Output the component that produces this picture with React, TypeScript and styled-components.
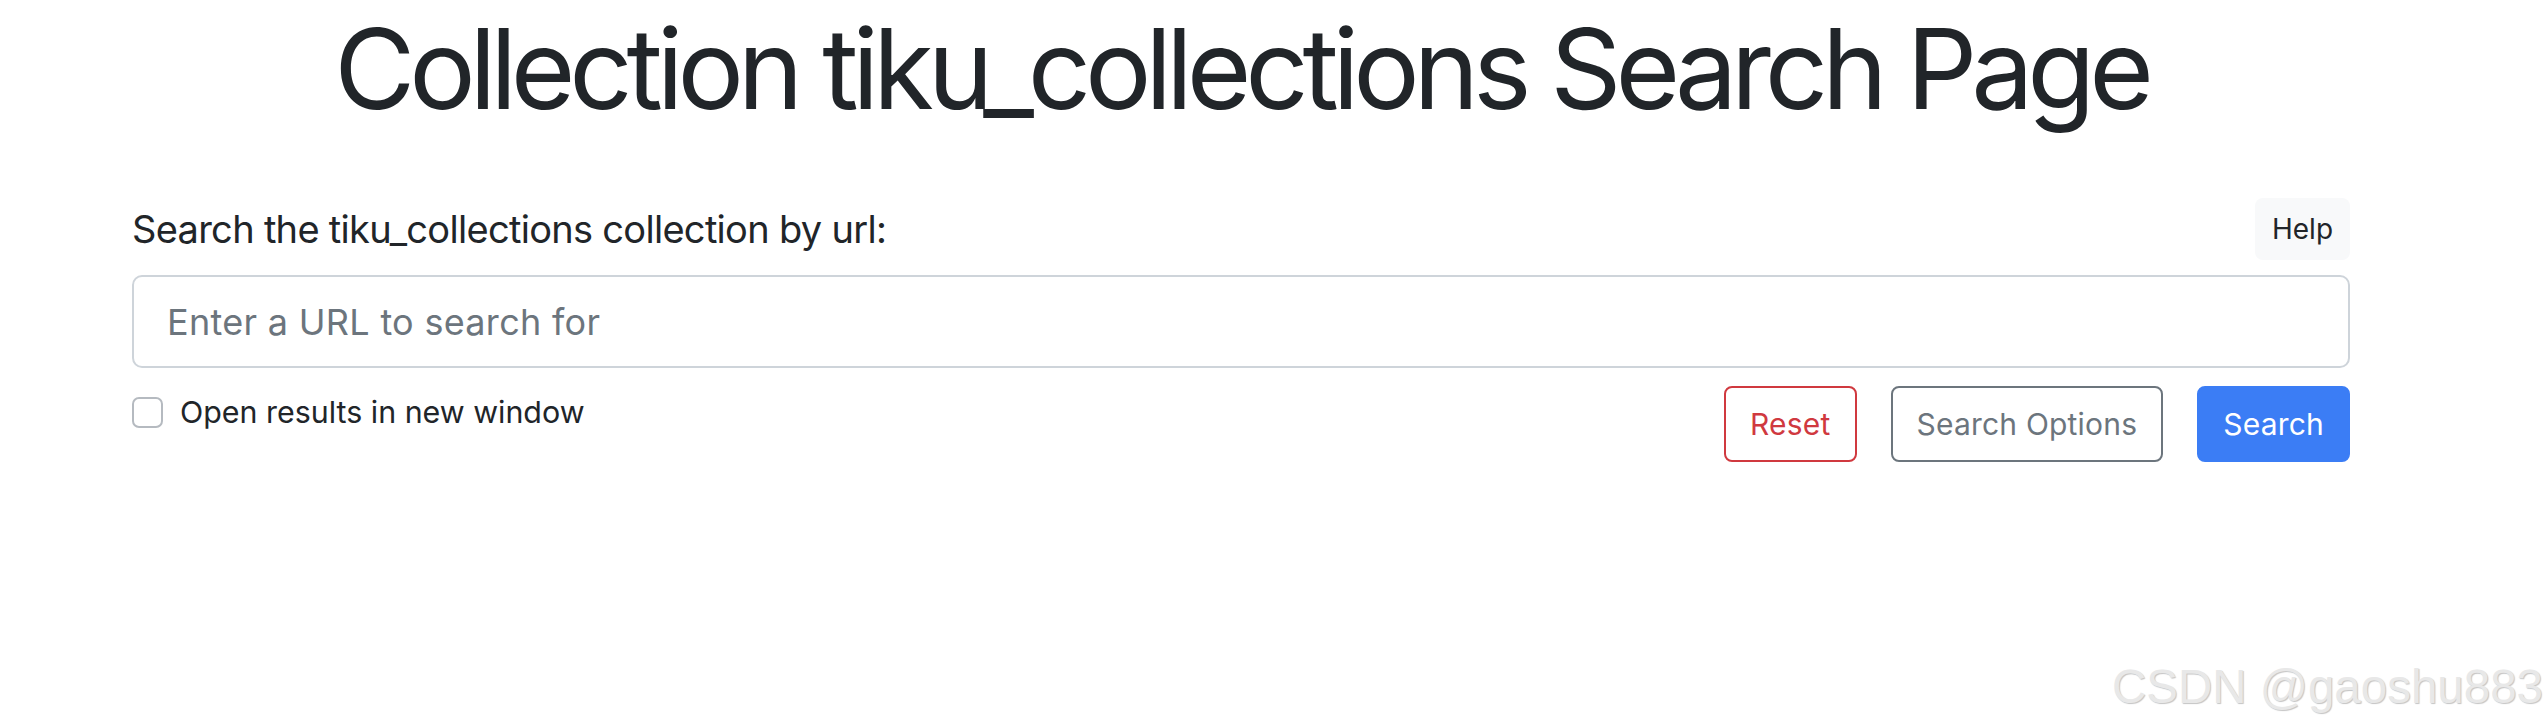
import React from "react";
import styled, { createGlobalStyle } from "styled-components";

const Global = createGlobalStyle`
  html, body { margin: 0; padding: 0; background: #fff; }
  body { font-family: Inter, "Noto Sans", sans-serif; color: #212529; }
  * { box-sizing: border-box; }
`;

const Page = styled.div`
  position: relative;
  width: 2548px;
  height: 728px;
  overflow: hidden;
`;

const Container = styled.main`
  width: 2218px;
  margin-left: 132px;
  display: flex;
  flex-direction: column;
`;

const Title = styled.h1`
  margin: 0;
  height: 132px;
  padding-top: 9px;
  font-size: 111px;
  font-weight: 400;
  line-height: 120px;
  letter-spacing: -6.2px;
  text-align: center;
  color: #212529;
  white-space: nowrap;
`;

const LabelRow = styled.div`
  margin-top: 66px;
  display: flex;
  align-items: center;
  justify-content: space-between;
`;

const Label = styled.label`
  font-size: 38px;
  font-weight: 400;
  letter-spacing: -0.7px;
  color: #212529;
`;

const HelpButton = styled.button`
  width: 95px;
  height: 62px;
  border: none;
  border-radius: 8px;
  background: #f8f9fa;
  color: #212529;
  font-family: Inter, sans-serif;
  font-size: 28px;
  padding: 0;
`;

const UrlInput = styled.input`
  margin-top: 15px;
  height: 93px;
  width: 100%;
  border: 2px solid #ced4da;
  border-radius: 10px;
  padding: 0 33px;
  font-family: Inter, sans-serif;
  font-size: 36px;
  letter-spacing: 0.3px;
  color: #212529;
  outline: none;
  &::placeholder { color: #6c757d; }
`;

const ActionRow = styled.div`
  margin-top: 18px;
  display: flex;
  align-items: flex-start;
  justify-content: space-between;
`;

const CheckLabel = styled.label`
  margin-top: 8px;
  display: flex;
  align-items: center;
  gap: 17px;
  font-size: 30.4px;
  color: #212529;
`;

const CheckBox = styled.span`
  width: 31px;
  height: 31px;
  border: 2px solid #b5bac0;
  border-radius: 7px;
  background: #fff;
`;

const Buttons = styled.div`
  display: flex;
  gap: 34px;
`;

const Btn = styled.button<{ $variant: "danger" | "secondary" | "primary" }>`
  height: 76px;
  padding: 0 24px;
  border-radius: 8px;
  font-family: Inter, sans-serif;
  font-size: 30px;
  letter-spacing: 0.2px;
  border: 2px solid
    ${(p) => (p.$variant === "danger" ? "#d0393f" : p.$variant === "secondary" ? "#6c757d" : "#3b7df5")};
  color: ${(p) => (p.$variant === "danger" ? "#d0393f" : p.$variant === "secondary" ? "#6c757d" : "#fff")};
  background: ${(p) => (p.$variant === "primary" ? "#3b7df5" : "#fff")};
`;

const Watermark = styled.div`
  position: absolute;
  right: 5px;
  bottom: 14px;
  font-family: "Liberation Sans", Arial, sans-serif;
  font-size: 47.5px;
  color: #e8e8e8;
  text-shadow: 1px 1px 1px #c4c4c4, -1px -1px 0 #fff;
  white-space: nowrap;
`;

export default function App() {
  return (
    <Page>
      <Global />
      <Container>
        <Title>Collection tiku_collections Search Page</Title>
        <LabelRow>
          <Label>Search the tiku_collections collection by url:</Label>
          <HelpButton>Help</HelpButton>
        </LabelRow>
        <UrlInput placeholder="Enter a URL to search for" />
        <ActionRow>
          <CheckLabel>
            <CheckBox />
            Open results in new window
          </CheckLabel>
          <Buttons>
            <Btn $variant="danger">Reset</Btn>
            <Btn $variant="secondary">Search Options</Btn>
            <Btn $variant="primary">Search</Btn>
          </Buttons>
        </ActionRow>
      </Container>
      <Watermark>CSDN @gaoshu883</Watermark>
    </Page>
  );
}
